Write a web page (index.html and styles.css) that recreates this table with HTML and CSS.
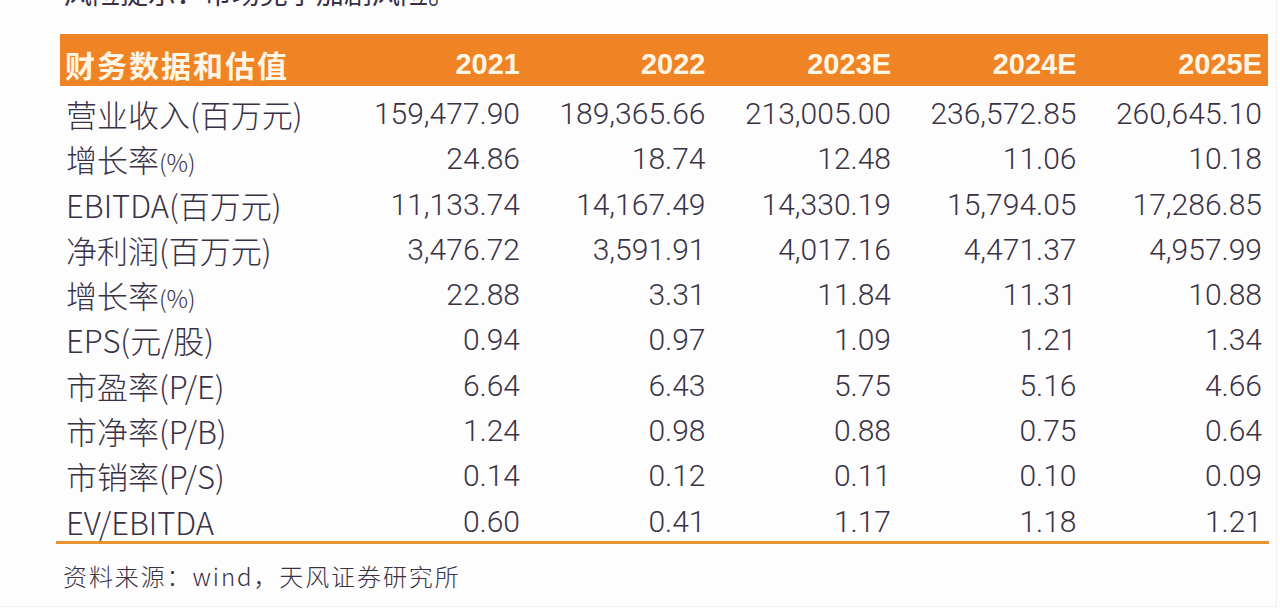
FILE: index.html
```html
<!DOCTYPE html>
<html lang="zh-CN">
<head>
<meta charset="utf-8">
<title>财务数据和估值</title>
<link rel="stylesheet" href="styles.css">
</head>
<body>
<div class="page">
  <div class="caption"><div class="caption-text">风险提示：市场竞争加剧风险。</div></div>
  <div class="table">
    <div class="row head">
      <div class="label">财务数据和估值</div>
      <div class="num">2021</div>
      <div class="num">2022</div>
      <div class="num">2023E</div>
      <div class="num">2024E</div>
      <div class="num">2025E</div>
    </div>
    <div class="body">
      <div class="row">
        <div class="label">营业收入(百万元)</div>
        <div class="num">159,477.90</div><div class="num">189,365.66</div><div class="num">213,005.00</div><div class="num">236,572.85</div><div class="num">260,645.10</div>
      </div>
      <div class="row">
        <div class="label">增长率<span class="pct">(%)</span></div>
        <div class="num">24.86</div><div class="num">18.74</div><div class="num">12.48</div><div class="num">11.06</div><div class="num">10.18</div>
      </div>
      <div class="row">
        <div class="label">EBITDA(百万元)</div>
        <div class="num">11,133.74</div><div class="num">14,167.49</div><div class="num">14,330.19</div><div class="num">15,794.05</div><div class="num">17,286.85</div>
      </div>
      <div class="row">
        <div class="label">净利润(百万元)</div>
        <div class="num">3,476.72</div><div class="num">3,591.91</div><div class="num">4,017.16</div><div class="num">4,471.37</div><div class="num">4,957.99</div>
      </div>
      <div class="row">
        <div class="label">增长率<span class="pct">(%)</span></div>
        <div class="num">22.88</div><div class="num">3.31</div><div class="num">11.84</div><div class="num">11.31</div><div class="num">10.88</div>
      </div>
      <div class="row">
        <div class="label">EPS(元/股)</div>
        <div class="num">0.94</div><div class="num">0.97</div><div class="num">1.09</div><div class="num">1.21</div><div class="num">1.34</div>
      </div>
      <div class="row">
        <div class="label">市盈率(P/E)</div>
        <div class="num">6.64</div><div class="num">6.43</div><div class="num">5.75</div><div class="num">5.16</div><div class="num">4.66</div>
      </div>
      <div class="row">
        <div class="label">市净率(P/B)</div>
        <div class="num">1.24</div><div class="num">0.98</div><div class="num">0.88</div><div class="num">0.75</div><div class="num">0.64</div>
      </div>
      <div class="row">
        <div class="label">市销率(P/S)</div>
        <div class="num">0.14</div><div class="num">0.12</div><div class="num">0.11</div><div class="num">0.10</div><div class="num">0.09</div>
      </div>
      <div class="row">
        <div class="label">EV/EBITDA</div>
        <div class="num">0.60</div><div class="num">0.41</div><div class="num">1.17</div><div class="num">1.18</div><div class="num">1.21</div>
      </div>
    </div>
    <div class="rule"></div>
  </div>
  <div class="source">资料来源：wind，天风证券研究所</div>
</div>
</body>
</html>
```

FILE: styles.css
```css
html, body {
  margin: 0;
  padding: 0;
  background: #fdfdfe;
}

.page {
  width: 1277px;
  height: 607px;
  border-right: 1px solid #f1f1f4;
  border-bottom: 1px solid #f1f1f4;
  box-sizing: border-box;
  padding-left: 60px;
  font-family: "Roboto", "Noto Sans CJK SC", sans-serif;
  color: #3a3244;
  overflow: hidden;
}

.caption {
  height: 8px;
  overflow: hidden;
  margin-left: 4px;
  margin-bottom: 26px;
}

.caption-text {
  font-family: "Noto Sans CJK SC", sans-serif;
  font-size: 28px;
  line-height: 30px;
  margin-top: -23px;
  color: #3a3244;
  white-space: nowrap;
}

.table {
  width: 1208px;
}

.row {
  display: grid;
  grid-template-columns: 280.5px repeat(5, 185.5px);
  box-sizing: border-box;
  height: 45.3px;
  padding-top: 7px;
  line-height: 38.3px;
  font-size: 30px;
  font-weight: 300;
  white-space: nowrap;
}

.row .label {
  padding-left: 6px;
  font-family: "Noto Sans CJK SC", sans-serif;
  font-size: 31px;
  font-weight: 300;
}

.row .num {
  text-align: right;
  padding-right: 6px;
}

.pct {
  font-size: 24px;
}

.head {
  height: 52px;
  padding-top: 8px;
  line-height: 44px;
  background: #f08424;
  color: #fff6e6;
  font-weight: 700;
  margin-bottom: 2px;
}

.head .num {
  font-family: "Liberation Sans", "Roboto", sans-serif;
  font-weight: 700;
  font-size: 29px;
}

.head .label {
  padding-left: 5px;
  font-weight: 700;
  font-size: 30px;
  letter-spacing: 2px;
}

.rule {
  height: 3px;
  margin-left: -4px;
  margin-right: -1px;
  background: #e8922f;
}

.source {
  margin-top: 17px;
  padding-left: 3px;
  font-family: "Noto Sans CJK SC", sans-serif;
  font-size: 24px;
  letter-spacing: 1.9px;
  line-height: 30px;
  font-weight: 300;
  color: #3a3244;
}
```
